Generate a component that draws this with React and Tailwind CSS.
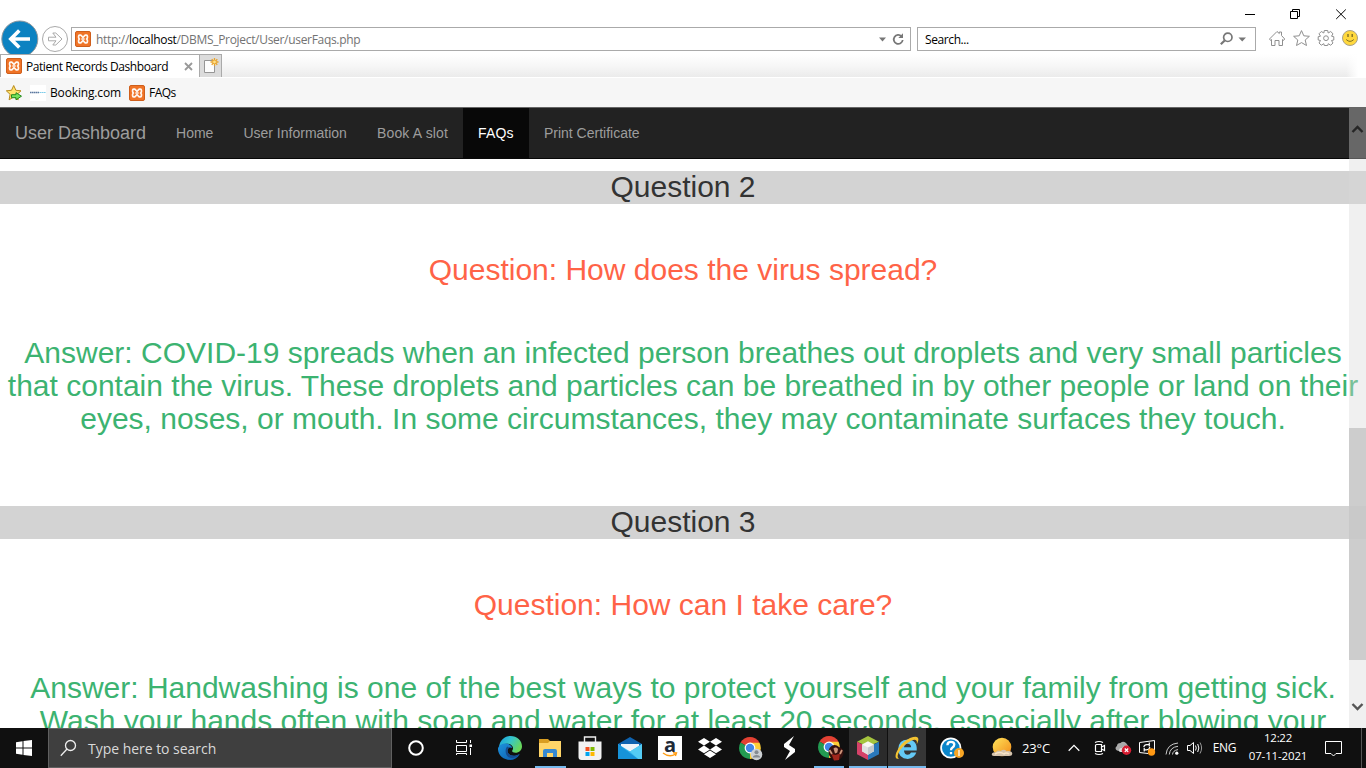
import React from "react";

const UI = "font-['Open_Sans','Noto_Sans',sans-serif]";

function Xampp() {
  return (
    <svg viewBox="0 0 16 16" className="h-4 w-4 shrink-0">
      <rect x=".5" y=".5" width="15" height="15" rx="1.5" fill="#f07427" stroke="#cf5f1c" />
      <path d="M4.6 4.2H5.8L8 6.3L10.2 4.2H11.4Q12.4 4.2 12.4 5.2V6.5Q12.4 7.5 11.6 8Q12.4 8.5 12.4 9.5V10.8Q12.4 11.8 11.4 11.8H10.2L8 9.7L5.8 11.8H4.6Q3.6 11.8 3.6 10.8V9.5Q3.6 8.5 4.4 8Q3.6 7.5 3.6 6.5V5.2Q3.6 4.2 4.6 4.2Z" fill="none" stroke="#fff7ef" strokeWidth="1.7" strokeLinejoin="round" />
      <path d="M6.3 8H9.7" stroke="#fff7ef" strokeWidth="1.5" />
    </svg>
  );
}

function BrowserChrome() {
  return (
    <div className={`flex h-[108px] shrink-0 flex-col bg-white text-[12px] text-black ${UI}`}>
      <div className="flex h-[54px] overflow-hidden">
        <svg width="70" height="54" viewBox="0 0 70 54" className="shrink-0">
          <circle cx="19.8" cy="39" r="18" fill="#0c82c1" stroke="#8d989e" strokeWidth="1" />
          <path d="M30 39H11.5M19.3 30.5L10.8 39L19.3 47.5" fill="none" stroke="#fff" strokeWidth="3.6" />
          <circle cx="55" cy="39" r="12.5" fill="#fff" stroke="#aaa" />
          <path d="M48.5 37.2H56L52.8 33H55.8L62 39L55.8 45H52.8L56 40.8H48.5Z" fill="#fff" stroke="#aaa" />
        </svg>
        <div className="flex grow flex-col">
          <div className="flex h-[27px] justify-end">
            <svg width="130" height="27" viewBox="0 0 130 27" fill="none" stroke="#000">
              <path d="M9 14.5H19M54.5 11.5H61.5V18.5H54.5ZM56.5 11V9.5H63.5V16.5H62M100.2 9.5L109.8 19M109.8 9.5L100.2 19" />
            </svg>
          </div>
          <div className="flex h-6">
            <div className="ml-px flex w-[840px] items-center border border-[#aaa] pl-[3px] pr-[3px]">
              <Xampp />
              <span className="ml-[5px] grow whitespace-nowrap pt-0.5 tracking-[-0.31px] text-[#737373]">http://<span className="text-black">localhost</span>/DBMS_Project/User/userFaqs.php</span>
              <svg width="29" height="20" viewBox="0 0 29 20" fill="none">
                <path d="M1 8.5H8L4.5 12.5Z" fill="#777" />
                <path d="M23.5 7.3A4.5 4.5 0 1 0 24.7 11" stroke="#777" strokeWidth="1.8" />
                <path d="M25 4.2V9.1H20.3Z" fill="#777" />
              </svg>
            </div>
            <div className="ml-[6px] flex w-[339px] items-center border border-[#aaa] pl-[7px] pr-[9px]">
              <span className="grow pt-0.5 tracking-[-0.4px]">Search...</span>
              <svg width="26" height="20" viewBox="0 0 26 20" fill="none">
                <circle cx="7.8" cy="8.3" r="4.2" stroke="#777" strokeWidth="1.7" />
                <path d="M4.7 11.5L.8 15.3" stroke="#777" strokeWidth="2.2" />
                <path d="M18.5 8.5H26L22.2 12.5Z" fill="#777" />
              </svg>
            </div>
            <svg width="110" height="24" viewBox="1256 27 110 24" className="shrink-0" fill="none" stroke="#8f8f8f">
              <path d="M1269.5 39L1277 31.5L1279.3 33.5V32H1281.5V35.5L1284.7 39L1283.6 40.4L1282.5 39.5V45.5H1279V40.5H1275V45.5H1271.5V39.5L1270.5 40.4Z" />
              <path d="M1301.5 30.6L1303.8 35.8L1309.4 36.3L1305.2 40L1306.5 45.5L1301.5 42.6L1296.5 45.5L1297.8 40L1293.6 36.3L1299.2 35.8Z" />
              <path d="M1324.3 30.5H1327.7L1328.2 33L1330.7 31.5L1333 33.8L1331.5 36.2L1333.8 36.7V40L1331.5 40.5L1333 43L1330.7 45.2L1328.2 43.7L1327.7 45.5H1324.3L1323.8 43.7L1321.3 45.2L1319 43L1320.5 40.5L1318.2 40V36.7L1320.5 36.2L1319 33.8L1321.3 31.5L1323.8 33Z" />
              <circle cx="1326" cy="38.2" r="2.4" />
              <circle cx="1350" cy="38" r="7.5" fill="#ffd83d" stroke="#aaa187" />
              <path d="M1348 34V37M1352.2 34V37" stroke="#806f24" strokeWidth="1.4" />
              <path d="M1346.2 39.5Q1350 43.3 1353.8 39.5" stroke="#806f24" strokeWidth="1" />
            </svg>
          </div>
        </div>
      </div>
      <div className="relative flex h-[23px] bg-gradient-to-b from-white via-[#f7f7f7] to-[#ebebeb]">
        <div className="absolute right-0 top-0 h-full w-5 bg-gradient-to-r from-transparent to-white to-60%" />
        <div className="flex w-[200px] items-center border border-b-0 border-[#aaa] bg-white pl-[5px]">
          <Xampp />
          <span className="ml-1 grow whitespace-nowrap pt-px tracking-[-0.43px]">Patient Records Dashboard</span>
          <svg width="9" height="9" viewBox="0 0 9 9" className="mr-[6px]"><path d="M1 1L8 8M8 1L1 8" stroke="#999" strokeWidth="1.8" /></svg>
        </div>
        <div className="w-[22px] border border-b-0 border-l-0 border-[#aaa] bg-[#dcdcdc]">
          <svg width="20" height="22" viewBox="0 0 20 22">
            <path d="M4.5 5.5H14.5V17.5H4.5Z" fill="#fdfdfd" stroke="#969696" />
            <path d="M14.5 3V11M10.5 7H18.5M11.7 4.2L17.3 9.8M17.3 4.2L11.7 9.8" stroke="#e9a42c" strokeWidth="1.3" />
            <circle cx="14.5" cy="7" r="1.4" fill="#ffe18a" />
          </svg>
        </div>
      </div>
      <div className="flex h-[31px] items-center border-b border-t border-b-[#666] border-t-white bg-[#f6f6f6] pl-[5px]">
        <svg width="18" height="18" viewBox="0 0 18 18">
          <path d="M8.7 1.5L10.9 6.3L16 6.8L12.2 10.3L13.2 15.8L8.7 13L4.1 15.8L5.1 10.3L1.3 6.8L6.5 6.3Z" fill="#ffe36b" stroke="#b98b1e" />
          <path d="M6.5 10.7H11V8.7L16.5 12.2L11 15.8V13.7H6.5Z" fill="#74e35c" stroke="#23891e" />
        </svg>
        <div className="ml-[7px] flex h-4 w-4 items-center justify-center bg-white">
          <svg width="16" height="3" viewBox="0 0 16 3"><path d="M0 1.5H9" stroke="#5c789f" strokeWidth="1.3" strokeDasharray="1.6 .4" /><path d="M9.5 1.5H16" stroke="#7fcdea" strokeWidth="1.2" strokeDasharray="1.6 .4" /></svg>
        </div>
        <span className="ml-1 w-[75px] pt-px tracking-[-0.15px]">Booking.com</span>
        <div className="ml-[4px]"><Xampp /></div>
        <span className="ml-1 pt-px tracking-[-0.5px]">FAQs</span>
      </div>
    </div>
  );
}

function Faq({ number, question, children }) {
  return (
    <section className="flex flex-col text-center text-[30px] leading-[33px]">
      <h2 className="h-[33px] bg-[#d3d3d3] leading-[31px] text-[#333]">Question {number}</h2>
      <p className="mt-[49px] text-[#ff6347]">Question: {question}</p>
      <p className="mb-px mt-[50px] whitespace-nowrap text-[#3cb371]">{children}</p>
    </section>
  );
}

function Page() {
  return (
    <main className="relative h-[620px] shrink-0 overflow-hidden bg-white font-['Liberation_Sans',Arial,sans-serif]">
      <nav className="flex h-[51px] border-b border-[#080808] bg-[#222] text-[14px] leading-[50px] text-[#9d9d9d]">
        <span className="px-[15px] text-[18px]">User Dashboard</span>
        <span className="px-[15px]">Home</span>
        <span className="px-[15px]">User Information</span>
        <span className="w-[101px] pl-[15px] tracking-[0.18px]">Book A slot</span>
        <span className="w-[66px] bg-[#080808] pl-[15px] tracking-[0.2px] text-white">FAQs</span>
        <span className="px-[15px]">Print Certificate</span>
      </nav>
      <div className="flex flex-col gap-[70px] pt-3">
        <Faq number="2" question="How does the virus spread?">
          Answer: COVID-19 spreads when an infected person breathes out droplets and very small particles<br />
          that contain the virus. These droplets and particles can be breathed in by other people or land on their<br />
          eyes, noses, or mouth. In some circumstances, they may contaminate surfaces they touch.
        </Faq>
        <Faq number="3" question="How can I take care?">
          Answer: Handwashing is one of the best ways to protect yourself and your family from getting sick.<br />
          Wash your hands often with soap and water for at least 20 seconds, especially after blowing your
        </Faq>
      </div>
      <div className="absolute right-0 top-0 flex h-full w-[17px] flex-col items-center bg-[#d7d7d7]/38">
        <svg width="17" height="50" viewBox="0 0 17 50" className="shrink-0"><path d="M3.5 24L8.5 19L13.5 24" fill="none" stroke="#262626" strokeWidth="2.4" /></svg>
        <div className="mt-[270px] h-[232px] w-full shrink-0 bg-[#c7c7c7]/85" />
        <svg width="17" height="68" viewBox="0 0 17 68" className="shrink-0"><path d="M3.5 44L8.5 49L13.5 44" fill="none" stroke="#555" strokeWidth="2.4" /></svg>
      </div>
    </main>
  );
}

function Chrome({ badge }) {
  return (
    <svg width="28" height="28" viewBox="0 0 28 28">
      <path d="M12 13L2.5 7.5A11 11 0 0 1 21.5 7.5Z" fill="#e34133" />
      <path d="M12 13L2.5 7.5A11 11 0 0 0 12 24L17 16Z" fill="#229b52" />
      <path d="M12 13L12 24A11 11 0 0 0 21.5 7.8H12Z" fill="#fdcd35" />
      <circle cx="12" cy="13" r="5.4" fill="#fff" /><circle cx="12" cy="13" r="4.2" fill="#4285e8" />
      {badge === "grey" ? (
        <g><circle cx="18.5" cy="19.5" r="5.8" fill="#ccd0d3" /><circle cx="18.5" cy="17.2" r="2" fill="#858b91" /><path d="M14.8 22.5Q15 20 18.5 20T22.2 22.5Z" fill="#858b91" /></g>
      ) : (
        <g><path d="M12 21Q10.5 15 14 12.5Q18 9.5 22 13Q27 14.5 26.5 19Q26 24 21 26.5Q15 27 12 21Z" fill="#35100e" /><path d="M16.5 14.5Q19 12.5 21 15L20.3 18.5L18 19.5Z" fill="#cf947a" /><path d="M14.5 20L18.5 21L23 19.5L22 26L17 26.5Z" fill="#a1271d" /><path d="M12.5 16L15 20M25 16L23 20" stroke="#cf947a" strokeWidth="1.8" /></g>
      )}
    </svg>
  );
}

function Cell({ className, children }) {
  return <div className={`flex h-10 shrink-0 items-center justify-center ${className}`}>{children}</div>;
}

function Taskbar() {
  return (
    <footer className={`flex h-10 shrink-0 bg-[#101010] text-[12px] text-white ${UI}`}>
      <Cell className="w-12">
        <svg width="16" height="16" viewBox="0 0 16 16" fill="#fff"><path d="M0 2.2L6.5 1.3V7.5H0ZM7.5 1.1L16 0V7.5H7.5ZM0 8.5H6.5V14.7L0 13.8ZM7.5 8.5H16V16L7.5 14.9Z" /></svg>
      </Cell>
      <div className="flex h-10 w-[344px] shrink-0 items-center border border-[#606060] bg-[#3f3f3f] pl-[11px]">
        <svg width="17" height="18" viewBox="0 0 17 18" fill="none" stroke="#eee" strokeWidth="1.3"><circle cx="10.5" cy="6.5" r="5" /><path d="M7 10L.8 16.7" /></svg>
        <span className="ml-[11px] whitespace-nowrap text-[14px] tracking-[-0.03px] text-[#d9d9d9]">Type here to search</span>
      </div>
      <Cell className="w-12"><svg width="18" height="18" viewBox="0 0 18 18"><circle cx="9" cy="9" r="6.8" fill="none" stroke="#fff" strokeWidth="2" /></svg></Cell>
      <Cell className="w-[47px]">
        <svg width="16" height="16" viewBox="0 0 16 16" fill="none" stroke="#fff"><path d="M.5 0V2.5H10.5V0M.5 5.5H10.5V11.5H.5ZM.5 15V13.5H10.5V15M14.5 0V3M14.5 8V15" /><path d="M13.5 4.5H16V7H13.5Z" fill="#fff" stroke="none" /></svg>
      </Cell>
      <Cell className="w-[46px]">
        <svg width="24" height="24" viewBox="0 0 24 24">
          <defs>
            <linearGradient id="edgeTop" x1="0" y1="0" x2="1" y2=".5"><stop stopColor="#159bdd" /><stop offset=".5" stopColor="#35c5cd" /><stop offset="1" stopColor="#68d75b" /></linearGradient>
            <linearGradient id="edgeLow" x2="1" y2="1"><stop stopColor="#1e93dc" /><stop offset="1" stopColor="#0b59ad" /></linearGradient>
          </defs>
          <path d="M1 11C2 3.8 7 0 12.5 0C19 0 24 4.7 24 10.2C24 14.2 21 16.7 17.5 16.7C14.8 16.7 13.6 15.5 14.4 14.3C16 12 14.5 8.2 10 7.7C6 7.3 2.8 8.7 1 11Z" fill="url(#edgeTop)" />
          <path d="M0 12.3C1 8.8 5 7.2 8.5 7.6C12 8 14 10 14 12C11.5 10.6 9.3 12.1 9.5 15C9.8 19.3 15.6 21.5 21.7 18C19.6 22 16 24 12 24C5 24-.5 18.5 0 12.3Z" fill="url(#edgeLow)" />
          <path d="M9.2 10.5C6.8 13 7 18.8 10.6 21.3C14.1 23.2 18.8 21.7 21.7 18C15.6 21.5 9.8 19.3 9.5 15C9.4 13.2 10.2 12.1 11.5 11.7Z" fill="#164b8f" />
        </svg>
      </Cell>
      <Cell className="w-[36px] flex-col !justify-end">
        <svg width="22" height="20" viewBox="0 0 22 20" className="mb-[7px] mr-[3px]"><path d="M0 0H9L11 2H22V6H0Z" fill="#d99e22" /><path d="M0 4L9 4L11 2H22V18H0Z" fill="#ffd568" /><path d="M4 18V12Q4 10 6 10H16Q18 10 18 12V18H14V14H8V18Z" fill="#3689d1" /></svg>
        <div className="mr-px h-0.5 w-[31px] bg-[#76b9ed]" />
      </Cell>
      <Cell className="w-[41px]">
        <svg width="24" height="24" viewBox="0 0 24 24"><path d="M6.5 6V1H17.5V6" fill="none" stroke="#eee" strokeWidth="1.4" /><path d="M.5 5.5H23.5V21Q23.5 24 20.5 24H3.5Q.5 24 .5 21Z" fill="#f2f2f2" /><path d="M7.5 11H11.5V15H7.5Z" fill="#f25022" /><path d="M12.5 11H16.5V15H12.5Z" fill="#7fba00" /><path d="M7.5 16H11.5V20H7.5Z" fill="#00a4ef" /><path d="M12.5 16H16.5V20H12.5Z" fill="#ffb900" /></svg>
      </Cell>
      <Cell className="w-10">
        <svg width="24" height="24" viewBox="0 0 24 24"><path d="M0 8L12 1L24 8V11H0Z" fill="#0f63b0" /><path d="M3 8H21V12L12 16L3 12Z" fill="#eef4f9" /><path d="M0 8L12 15.5L24 8V23H0Z" fill="#37b9ef" /><path d="M12 15.5L24 8V23H20Z" fill="#54ccf4" /><path d="M0 8L20 23H0Z" fill="#1793d9" /></svg>
      </Cell>
      <Cell className="w-10">
        <div className="flex h-6 w-6 flex-col items-center bg-white text-black">
          <span className="h-[16px] text-[20px] font-bold leading-[17px] text-[#202a37]">a</span>
          <svg width="16" height="6" viewBox="0 0 16 6"><path d="M1 1Q7.5 6 13.5 2M11 .8L14.5 1L13.4 4" fill="none" stroke="#ff9d14" strokeWidth="1.4" /></svg>
        </div>
      </Cell>
      <Cell className="w-10">
        <svg width="24" height="20" viewBox="0 0 24 20" fill="#fff"><path d="M6 0L12 3.8L6 7.6L0 3.8ZM18 0L24 3.8L18 7.6L12 3.8ZM0 11.4L6 7.6L12 11.4L6 15.2ZM18 7.6L24 11.4L18 15.2L12 11.4ZM6 16.2L12 12.4L18 16.2L12 20Z" /></svg>
      </Cell>
      <Cell className="w-[41px] pl-[2px] pt-[2px]"><Chrome badge="grey" /></Cell>
      <Cell className="w-[37px]">
        <svg width="12" height="24" viewBox="0 0 12 24" fill="#fff"><path d="M10 0L0 8V11L6 15L1 24L11 16V13L5 9Z" /></svg>
      </Cell>
      <Cell className="w-[41px] flex-col !justify-end pl-1"><Chrome badge="photo" /><div className="mr-[3px] mt-[4px] h-0.5 w-[30px] bg-[#76b9ed]" /></Cell>
      <Cell className="w-[38px] flex-col !justify-end bg-[#2b2b2b]">
        <svg width="22" height="24" viewBox="0 0 22 25" preserveAspectRatio="none" className="mb-[6px]"><path d="M0 6L11 0L22 6L11 11Z" fill="#a5c43e" /><path d="M0 6L11 12V25L0 19Z" fill="#d54269" /><path d="M22 6L11 12V25L22 19Z" fill="#2a78ba" /><path d="M11 5.5L17 8.8V16L11 19.5L5 16V8.8Z" fill="#f7f7f2" /><path d="M5 8.8L11 12V19.5L5 16Z" fill="#dfe1e1" /><path d="M11 12L17 8.8V16L11 19.5Z" fill="#c4c9cc" /></svg>
        <div className="h-0.5 w-full bg-[#76b9ed]" />
      </Cell>
      <Cell className="ml-px w-[38px] flex-col !justify-end bg-[#363636]">
        <svg width="24" height="26" viewBox="0 0 24 26" className="mb-[5px]">
          <path fillRule="evenodd" d="M21.3 17.6H16Q15 19.8 12.7 19.8Q9.3 19.8 9 15.6H21.7Q22.5 4.8 12.7 4.5Q3.5 4.8 3.2 14.3Q3.4 23.6 12.8 24Q19.3 23.6 21.3 17.6ZM9 12.2Q9.5 8.8 12.6 8.8T16.2 12.2Z" fill="#64c9f5" />
          <path d="M4 23.5Q-1 25 1.2 17.8Q5 8 15 3Q24-.5 23.3 5Q23 7 21.7 9.5Q23 2.8 16.5 5.4Q7 10.4 3.4 18.2Q1.6 22.5 4 23.5Z" fill="#f4c331" />
        </svg>
        <div className="h-0.5 w-full bg-[#76b9ed]" />
      </Cell>
      <Cell className="w-[52px]">
        <svg width="24" height="22" viewBox="0 0 24 22"><circle cx="10.8" cy="11" r="9.7" fill="#0b86ca" stroke="#fff" strokeWidth="1.8" /><path d="M7.4 8.2Q7.5 4.9 11 4.9Q14.3 4.9 14.3 7.6Q14.3 9.2 12.5 10.5Q11 11.5 11 13.2M11 15V17.3" fill="none" stroke="#fff" strokeWidth="2.3" /><circle cx="19" cy="16" r="5" fill="#f8a524" /><path d="M19 13V19" stroke="#fff" strokeWidth="1.3" /></svg>
      </Cell>
      <Cell className="w-[44px] pl-1">
        <svg width="22" height="22" viewBox="0 0 22 22"><defs><linearGradient id="sun" x2="1" y2="1"><stop stopColor="#ffe45a" /><stop offset="1" stopColor="#f28b19" /></linearGradient></defs><circle cx="11" cy="10" r="9.3" fill="url(#sun)" /><path d="M3 19Q0 18.8 1 16.5Q2 15 4.8 15.2Q6.5 12.5 9.7 14Q13 11.5 15.5 14.2Q20.5 13.6 21.3 16.5Q21.2 19 18 19Z" fill="#d6c4ae" /><path d="M4 17Q9 14 13 17Q15 15 18 17" fill="none" stroke="#f9e5c7" strokeWidth="1.5" /></svg>
      </Cell>
      <Cell className="w-[28px] whitespace-nowrap pt-0.5 text-[13px] tracking-[-0.1px]">23°C</Cell>
      <Cell className="w-12"><svg width="12" height="8" viewBox="0 0 12 8"><path d="M.7 6.7L6 1.4L11.3 6.7" fill="none" stroke="#fff" strokeWidth="1.3" /></svg></Cell>
      <Cell className="-ml-[7px] w-6 !justify-start pl-[3px]">
        <svg width="13" height="17" viewBox="0 0 13 17" fill="none" stroke="#fff"><path d="M1.5 5.5Q1.5 4.5 2.5 4.5H7.5V11.5H2.5Q1.5 11.5 1.5 10.5ZM7.5 7L10.5 5.5V10.5L7.5 9M1 2.5Q5 .5 9 2.5M1 13.5Q5 15.5 9 13.5" strokeWidth="1.2" /></svg>
      </Cell>
      <Cell className="w-6 !justify-start">
        <svg width="17" height="14" viewBox="0 0 17 14"><path d="M2 9.5Q-1 7 2 5Q2 2 5.5 2Q8-.5 11 2L14 6L7 11Z" fill="#aaa" /><path d="M4 10Q4 6.5 7 7Q9 3.5 12.5 6V11H5Z" fill="#ddd" /><circle cx="11.5" cy="9.2" r="4.7" fill="#d71e32" /><path d="M9.8 7.5L13.2 10.9M13.2 7.5L9.8 10.9" stroke="#fff" strokeWidth="1.3" /></svg>
      </Cell>
      <Cell className="w-6 !justify-start">
        <svg width="18" height="18" viewBox="0 0 18 18" fill="none" stroke="#fff"><path d="M.5 3.5L15.5 1.5V11M9 14.5L.5 13.5V3.5" /><path d="M4.8 8Q5.2 5.6 7.8 5.6H10.3V3.6M10.3 5.6V7.5M10.8 8Q10.4 10.8 7.5 10.8H5.2V8.8M5.2 10.8V12.5" strokeWidth="1.2" /><circle cx="12.5" cy="13" r="3.7" fill="#ff9914" stroke="none" /></svg>
      </Cell>
      <Cell className="-ml-[5px] w-[27px]">
        <svg width="14" height="14" viewBox="0 0 14 14" fill="none" stroke="#ccc"><path d="M1 13.5Q2 3 13 2M4.3 13.5Q5 6.2 13 5.3M7.5 13.5Q7.8 9.5 13 8.6" /><circle cx="11.8" cy="12.2" r="1.6" fill="#fff" stroke="none" /></svg>
      </Cell>
      <Cell className="-ml-0.5 w-6">
        <svg width="16" height="14" viewBox="0 0 16 14" fill="none" stroke="#fff"><path d="M.5 4.5H3L6.5 1.5V12.5L3 9.5H.5ZM8.5 4.5Q10 7 8.5 9.5M10.7 3Q13 7 10.7 11" /><path d="M13 1.5Q16.2 7 13 12.5" stroke="#999" /></svg>
      </Cell>
      <Cell className="w-[35px] tracking-[-0.3px]">ENG</Cell>
      <Cell className="w-[72px] flex-col whitespace-nowrap pb-0.5 text-[11.5px] leading-[18px]"><span className="h-[18px] tracking-[-0.3px]">12:22</span><span className="h-[18px] tracking-[-0.15px]">07-11-2021</span></Cell>
      <Cell className="w-[38px]">
        <svg width="17" height="17" viewBox="0 0 17 17" fill="none" stroke="#fff"><path d="M.5 1.5H16.5V13.5H11L8.5 16L6 13.5H.5Z" /></svg>
      </Cell>
      <div className="ml-auto mr-1 h-10 w-px bg-[#555]" />
    </footer>
  );
}

export default function App() {
  return (
    <div className="flex h-[768px] w-[1366px] flex-col overflow-hidden bg-white">
      <BrowserChrome />
      <Page />
      <Taskbar />
    </div>
  );
}
